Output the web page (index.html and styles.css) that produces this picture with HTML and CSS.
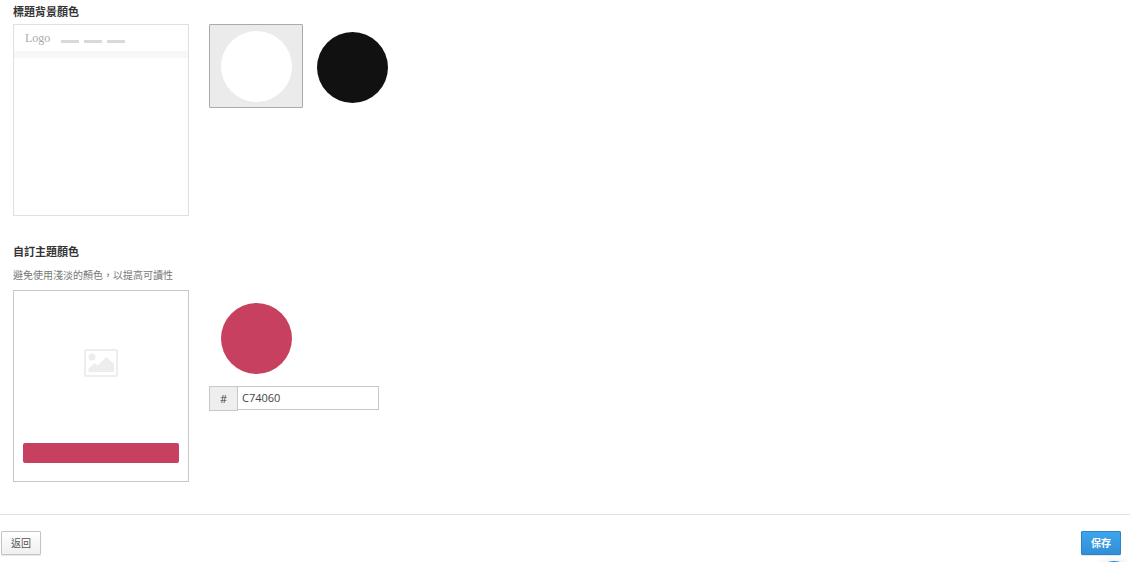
FILE: index.html
```html
<!DOCTYPE html>
<html lang="zh-Hant">
<head>
<meta charset="utf-8">
<meta name="viewport" content="width=device-width, initial-scale=1">
<title>標題背景顏色</title>
<link rel="stylesheet" href="styles.css">
</head>
<body>
<form class="page">
  <main class="settings">
    <section class="setting">
      <h2 class="setting-title" id="header-color">標題背景顏色</h2>
      <div class="setting-body">
        <div class="preview">
          <div class="preview-nav">
            <span class="preview-logo">Logo</span>
            <span class="preview-link"></span>
            <span class="preview-link"></span>
            <span class="preview-link"></span>
          </div>
        </div>
        <div class="swatches" role="group" aria-labelledby="header-color">
          <button type="button" class="swatch swatch-selected" aria-label="白色" aria-pressed="true"><span class="dot dot-white"></span></button>
          <button type="button" class="swatch" aria-label="黑色" aria-pressed="false"><span class="dot dot-black"></span></button>
        </div>
      </div>
    </section>
    <section class="setting">
      <h2 class="setting-title">自訂主題顏色</h2>
      <p class="setting-hint">避免使用淺淡的顏色，以提高可讀性</p>
      <div class="setting-body">
        <div class="preview preview-theme">
          <svg class="preview-image" viewBox="0 0 34 28" aria-hidden="true">
            <rect x="1" y="1" width="32" height="26" rx="1.5" fill="none" stroke="#ededed" stroke-width="2"/>
            <circle cx="8" cy="8" r="3.5" fill="#ededed"/>
            <path d="M4.500 23v-3.500l6-5.500 3 2.500 9-8.500 7.500 7v8z" fill="#ededed"/>
          </svg>
          <div class="preview-bar"></div>
        </div>
        <div class="picker">
          <button type="button" class="swatch" aria-label="主題顏色"><span class="dot dot-theme"></span></button>
          <div class="hex">
            <label class="hex-prefix" for="hex">#</label>
            <input class="hex-input" id="hex" type="text" value="C74060">
          </div>
        </div>
      </div>
    </section>
  </main>
  <footer class="actions">
    <button type="button" class="btn">返回</button>
    <button type="submit" class="btn btn-primary">保存</button>
  </footer>
</form>
<div class="chat" aria-hidden="true"></div>
</body>
</html>
```

FILE: styles.css
```css
* { box-sizing: border-box; }
html { height: 100%; overflow: hidden; }
body {
  margin: 0;
  min-height: 100%;
  background: #fff;
  color: #333;
  font-family: "Open Sans", "Noto Sans CJK TC", sans-serif;
  font-size: 11px;
  line-height: 16px;
}
.settings {
  display: flex;
  flex-direction: column;
  gap: 28px;
  padding: 4px 13px 32px;
}
.setting-title { margin: 0; font-size: 11px; line-height: 16px; font-weight: 700; }
.setting-title + .setting-body { margin-top: 4px; }
.setting-hint { margin: 8px 0; font-size: 10px; line-height: 14px; color: #777; }
.setting-body { display: flex; align-items: flex-start; gap: 20px; }
.preview {
  width: 176px;
  height: 192px;
  border: 1px solid #e1e1e1;
}
.preview-nav {
  display: flex;
  align-items: center;
  gap: 5px;
  height: 33px;
  padding: 0 11px;
  border-bottom: 7px solid #f7f7f7;
}
.preview-logo {
  margin-right: 6px;
  font-family: "Liberation Serif", serif;
  font-size: 12px;
  line-height: 12px;
  color: #aaa;
}
.preview-link { width: 18px; height: 3px; margin-top: 6px; background: #d9d9d9; }
.preview-theme {
  display: flex;
  flex-direction: column;
  align-items: center;
  justify-content: space-between;
  padding: 58px 9px 18px;
  border-color: #c8c8c8;
}
.preview-image { width: 34px; height: 28px; }
.preview-bar { width: 100%; height: 20px; border-radius: 2px; background: #c74060; }
.swatches { display: flex; gap: 2px; }
.swatch {
  display: flex;
  align-items: center;
  justify-content: center;
  width: 94px;
  height: 84px;
  padding: 2px 0 0 1px;
  border: 1px solid transparent;
  border-radius: 1px;
  background: none;
}
.swatch-selected { padding: 0; border-color: #aaa; background: #ebebeb; }
.dot { width: 71px; height: 71px; border-radius: 50%; }
.dot-white { background: #fff; }
.dot-black { background: #111; }
.dot-theme { background: #c74060; }
.picker { display: flex; flex-direction: column; gap: 7px; padding-top: 5px; }
.hex { display: flex; align-items: flex-start; }
.hex-prefix {
  width: 29px;
  height: 25px;
  border: 1px solid #c8c8c8;
  background: #eee;
  color: #444;
  line-height: 24px;
  text-align: center;
}
.hex-input {
  width: 142px;
  height: 24px;
  margin-left: -1px;
  padding: 0 4px 1px;
  border: 1px solid #c8c8c8;
  background: #fff;
  color: #444;
  font: inherit;
}
.actions {
  display: flex;
  justify-content: space-between;
  padding: 16px 9px 7px 1px;
  border-top: 1px solid #e1e1e1;
}
.btn {
  width: 40px;
  height: 24px;
  padding: 0;
  border: 1px solid #c4c4c4;
  border-radius: 1px;
  background: linear-gradient(#fff, #f0f0f0);
  box-shadow: 0 1px 1px rgba(0, 0, 0, .1);
  color: #555;
  font: inherit;
  font-size: 10px;
}
.btn-primary {
  border-color: #2d83c4;
  background: linear-gradient(#3da5ef, #318fd6);
  color: #fff;
  font-weight: 700;
}
.chat {
  position: fixed;
  right: -6px;
  bottom: -43px;
  width: 44px;
  height: 44px;
  border-radius: 50%;
  background: #1b86e8;
  box-shadow: 0 1px 8px rgba(0, 0, 0, .15);
}
```
